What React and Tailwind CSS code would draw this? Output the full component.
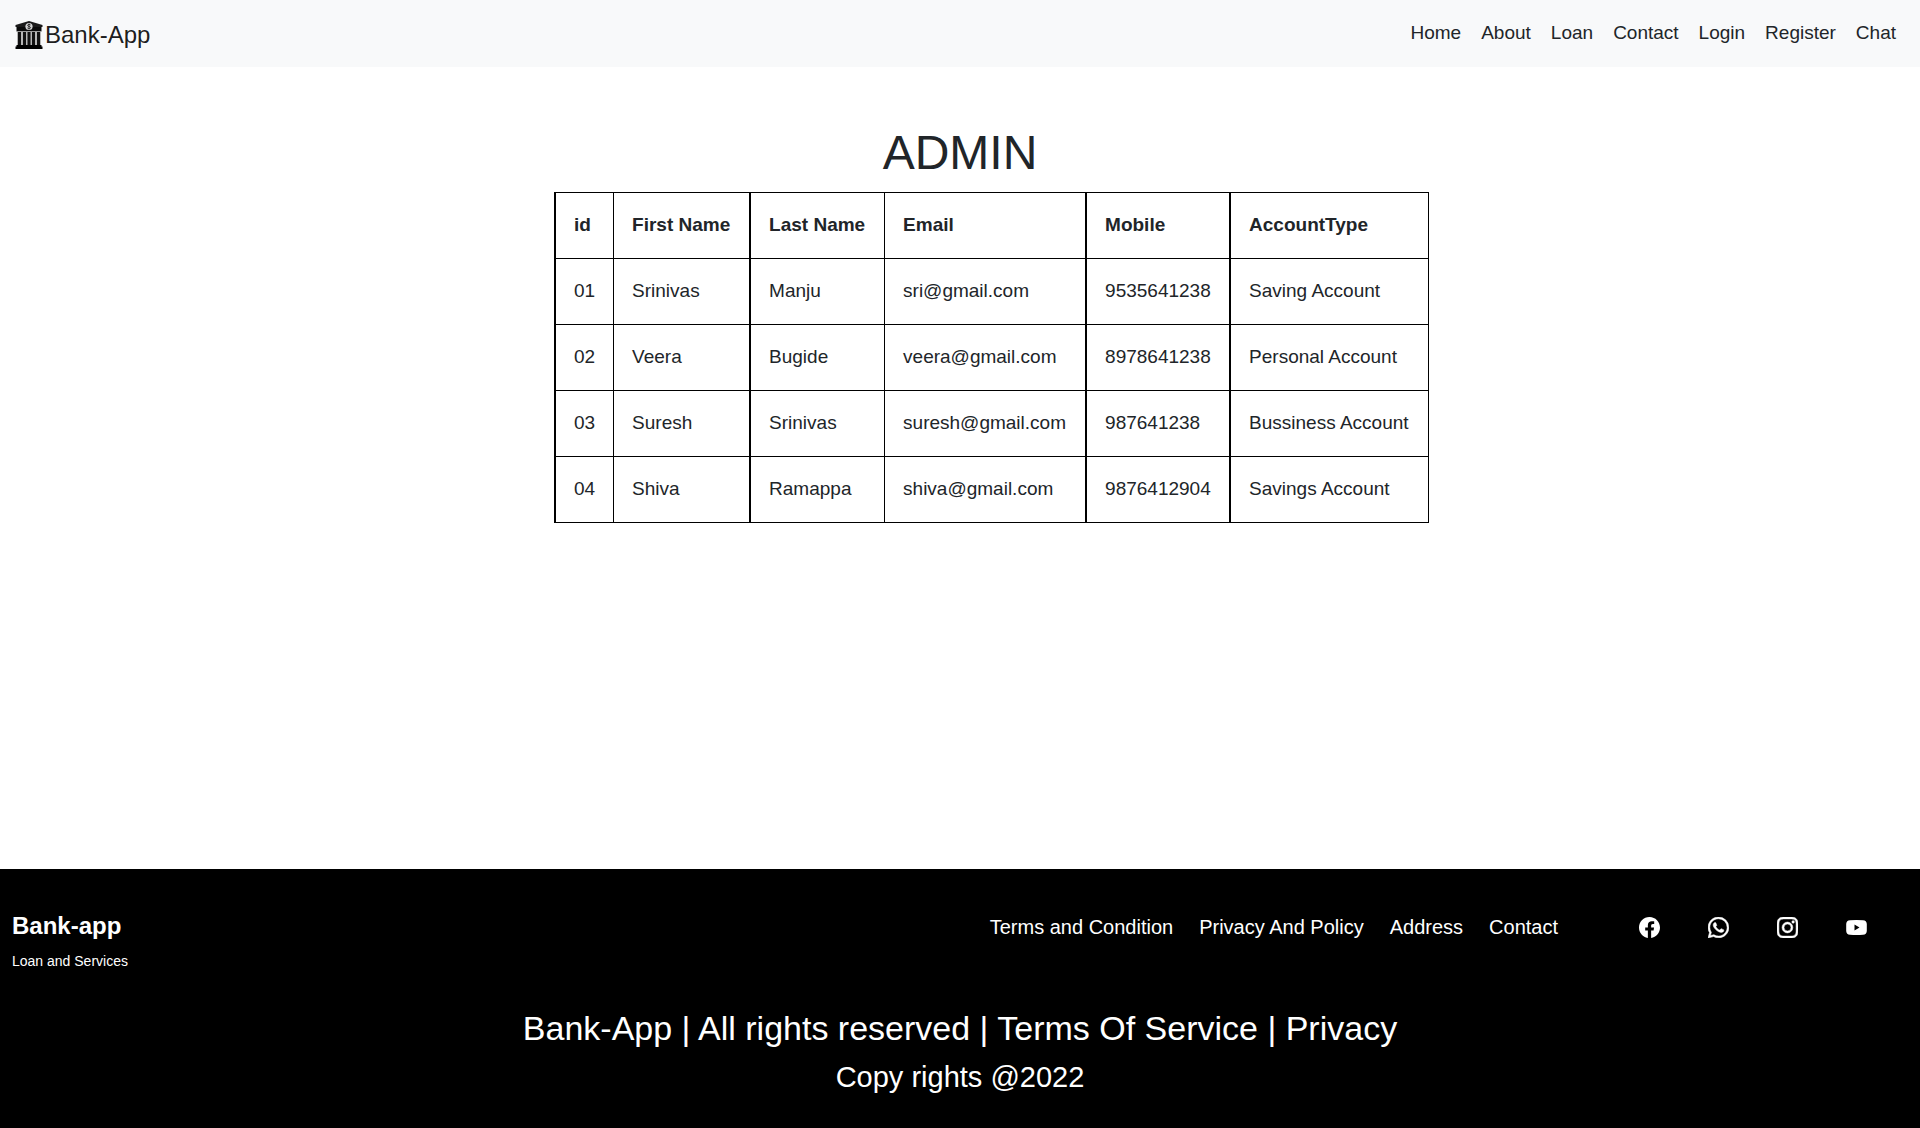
import { BsFacebook, BsWhatsapp, BsInstagram } from "react-icons/bs";

const navLinks = ["Home", "About", "Loan", "Contact", "Login", "Register", "Chat"];

const columns = [
  { label: "id", cell: "w-[58px] border-r" },
  { label: "First Name", cell: "w-[137px] border-r-2" },
  { label: "Last Name", cell: "w-[134px] border-r" },
  { label: "Email", cell: "w-[202px] border-r-2" },
  { label: "Mobile", cell: "w-[144px] border-r-2" },
  { label: "AccountType", cell: "w-[198px] border-r" },
];

const rows = [
  ["01", "Srinivas", "Manju", "sri@gmail.com", "9535641238", "Saving Account"],
  ["02", "Veera", "Bugide", "veera@gmail.com", "8978641238", "Personal Account"],
  ["03", "Suresh", "Srinivas", "suresh@gmail.com", "987641238", "Bussiness Account"],
  ["04", "Shiva", "Ramappa", "shiva@gmail.com", "9876412904", "Savings Account"],
];

const footerLinks = ["Terms and Condition", "Privacy And Policy", "Address", "Contact"];

function BankLogo() {
  return (
    <svg viewBox="0 0 28 28" className="size-7" aria-hidden="true">
      <path d="M14 0 27.500 4V6H.5V4Z" fill="#1a1a1a" />
      <path d="M1.500 6h25v4.500h-25z" fill="#0a0a0a" />
      <circle cx="14" cy="5.500" r="3.600" fill="#d4d4d4" />
      <path d="M15.600 4c-.6-.8-3-.8-3 .4 0 1.400 3 .8 3 2.200 0 1.200-2.400 1.200-3.200.3M14 2.600v5.800" stroke="#222" strokeWidth=".9" fill="none" />
      <path d="M2 10.500h24V25H2z" fill="#b5b5b5" />
      <path d="M3 11h3v13H3zM8 11h3v13H8zM12.500 11h3v13h-3zM17 11h3v13h-3zM22 11h3v13h-3z" fill="#111" />
      <path d="M1.500 24h25v1.500h1V28H.5v-2.500h1z" fill="#000" />
    </svg>
  );
}

function YoutubeIcon() {
  return (
    <svg viewBox="0 0 21 21" className="size-[21px]" fill="currentColor" aria-hidden="true">
      <path fillRule="evenodd" d="M4 3.200Q10.500 2.600 17 3.200 20.600 3.400 20.800 7v7q-.2 3.600-3.800 3.800-6.500.4-13 0Q.4 17.600.2 14V7Q.4 3.400 4 3.200ZM8.500 7.500v6l5-3Z" />
    </svg>
  );
}

const socials = [
  { name: "Facebook", icon: <BsFacebook className="size-[21px]" /> },
  { name: "WhatsApp", icon: <BsWhatsapp className="size-[21px]" strokeWidth="0.4" /> },
  { name: "Instagram", icon: <BsInstagram className="size-[21px]" strokeWidth="0.4" /> },
  { name: "YouTube", icon: <YoutubeIcon /> },
];

export default function App() {
  return (
    <div className="flex min-h-screen flex-col bg-white font-['Liberation_Sans',Arial,sans-serif] text-[19px] leading-[29px] text-[#212529]">
      <header className="flex items-center justify-between bg-[#f8f9fa] py-3.5 pr-6 pl-[15px]">
        <a href="#" className="flex items-center gap-0.5 pt-0.5 text-2xl leading-[37px] text-black/90">
          <BankLogo />
          <span>Bank-App</span>
        </a>
        <nav className="flex gap-5 pb-0.5">
          {navLinks.map((l) => (
            <a key={l} href="#">{l}</a>
          ))}
        </nav>
      </header>

      <main className="flex grow flex-col items-center pt-[57px]">
        <h1 className="text-5xl leading-[58px]">ADMIN</h1>
        <table className="mt-2.5 ml-[63px] table-fixed border-separate border-spacing-0 border-t border-l-2 border-black text-left">
          <thead>
            <tr>
              {columns.map((c) => (
                <th key={c.label} scope="col" className={`${c.cell} border-b border-black px-[18px] pt-[17px] pb-[19px] font-bold whitespace-nowrap`}>
                  {c.label}
                </th>
              ))}
            </tr>
          </thead>
          <tbody>
            {rows.map((r) => (
              <tr key={r[0]}>
                {r.map((v, i) => (
                  <td key={i} className={`${columns[i].cell} border-b border-black px-[18px] pt-[17px] pb-[19px] whitespace-nowrap`}>
                    {v}
                  </td>
                ))}
              </tr>
            ))}
          </tbody>
        </table>
      </main>

      <footer className="bg-black pt-[41px] pb-[33px] text-white">
        <div className="flex items-start justify-between pr-[53px] pl-3">
          <div>
            <h2 className="text-2xl leading-8 font-bold">Bank-app</h2>
            <p className="mt-2 text-sm leading-[22px]">Loan and Services</p>
          </div>
          <div className="flex items-center pt-0.5">
            <nav className="flex gap-[26px] text-xl leading-[30px]">
              {footerLinks.map((l) => (
                <a key={l} href="#">{l}</a>
              ))}
            </nav>
            <div className="ml-[81px] flex gap-12">
              {socials.map((s) => (
                <a key={s.name} href="#" aria-label={s.name}>{s.icon}</a>
              ))}
            </div>
          </div>
        </div>
        <div className="mt-9 text-center">
          <p className="text-[34px] leading-10">Bank-App | All rights reserved | Terms Of Service | Privacy</p>
          <p className="mt-3 text-[29px] leading-[35px]">Copy rights @2022</p>
        </div>
      </footer>
    </div>
  );
}
